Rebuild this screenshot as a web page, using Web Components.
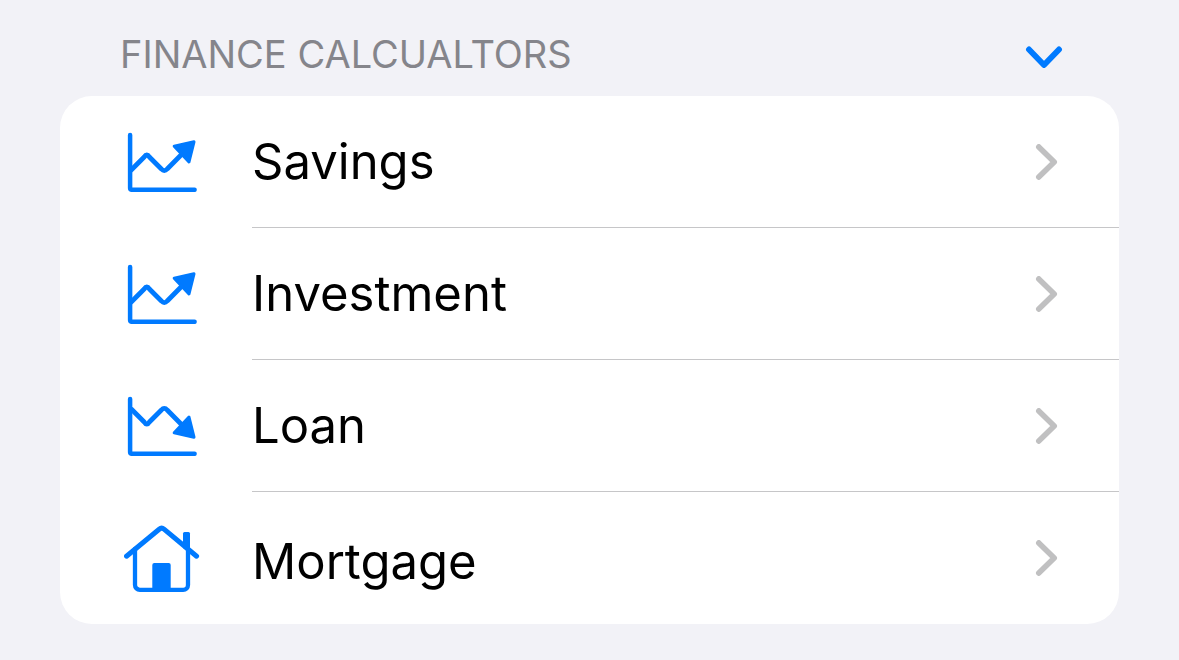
<!DOCTYPE html>
<html lang="en">
<head>
<meta charset="utf-8">
<meta name="viewport" content="width=device-width, initial-scale=1">
<title>Finance calculators</title>
<style>
  body { margin: 0; background: #f2f2f7; font-family: Inter, "Liberation Sans", sans-serif; color: #000; }
</style>
</head>
<body>
<calc-section heading="FINANCE CALCUALTORS">
  <calc-row icon="up" href="#savings">Savings</calc-row>
  <calc-row icon="up" href="#investment">Investment</calc-row>
  <calc-row icon="down" href="#loan">Loan</calc-row>
  <calc-row icon="house" href="#mortgage">Mortgage</calc-row>
</calc-section>
<script>
const AXES = '<path d="M6.1 3V56a1.8 1.8 0 0 0 1.8 1.8H70.6" stroke-width="4.5"/>';
const TREND = '<path d="M7.5 37.7L20.2 25Q22.8 20.6 25.4 25L37.4 37Q40.3 40.2 43.2 37L59 21" stroke-width="4.8"/><path d="M70 9.8L50.2 14.2L65 30Z" fill="currentColor" stroke-width="3"/>';
const ICONS = {
  up: { h: 60, art: AXES + TREND },
  down: { h: 60, art: AXES + '<g transform="matrix(1 0 0 -1 0 51)">' + TREND + '</g>' },
  house: { h: 68, art: `
    <path d="M2.5 32.2L35.2 5.2Q37.6 3.2 40 5.2L72.6 32.2" stroke-width="5"/>
    <path d="M11 25V61a4.8 4.8 0 0 0 4.8 4.8H59.2a4.8 4.8 0 0 0 4.8-4.8V25" stroke-width="4.3"/>
    <path d="M59 24V9.5a1.5 1.5 0 0 1 1.5-1.5h4a1.5 1.5 0 0 1 1.5 1.5V29Z" fill="currentColor" stroke="none"/>
    <path d="M28.3 67V41a2 2 0 0 1 2-2H44.7a2 2 0 0 1 2 2V67Z" fill="currentColor" stroke="none"/>` }
};

class CalcIcon extends HTMLElement {
  connectedCallback() {
    const { h, art } = ICONS[this.getAttribute('name')];
    this.attachShadow({ mode: 'open' }).innerHTML = `
      <style>
        :host { display: block; flex: none; color: #007aff; }
        svg { display: block; }
      </style>
      <svg width="76" height="${h}" viewBox="0 0 76 ${h}" fill="none" stroke="currentColor"
        stroke-linecap="round" stroke-linejoin="round" aria-hidden="true">${art}</svg>`;
  }
}

class CalcRow extends HTMLElement {
  connectedCallback() {
    this.attachShadow({ mode: 'open' }).innerHTML = `
      <style>
        :host { display: block; position: relative; }
        a { display: flex; align-items: center; justify-content: space-between; gap: 24px;
            min-height: 132px; box-sizing: border-box; padding: 0 61px 0 64px;
            color: inherit; text-decoration: none; }
        .title { display: flex; align-items: flex-end; gap: 52px; font-size: 49px; line-height: 60px; }
        .chevron { display: block; flex: none; }
        :host(:not(:last-of-type))::after { content: ""; position: absolute; left: 192px; right: 0;
            bottom: 0; height: 1px; background: #c6c6c8; }
      </style>
      <a href="${this.getAttribute('href')}">
        <span class="title"><calc-icon name="${this.getAttribute('icon')}"></calc-icon><span><slot></slot></span></span>
        <svg class="chevron" width="24" height="36" viewBox="0 0 24 36" fill="none" stroke="#c0c0c1"
          stroke-width="5.6" stroke-linecap="round" stroke-linejoin="round" aria-hidden="true">
          <path d="M4.8 2.9L20.2 18L4.8 33.1"/></svg>
      </a>`;
  }
}

class CalcSection extends HTMLElement {
  connectedCallback() {
    this.attachShadow({ mode: 'open' }).innerHTML = `
      <style>
        :host { display: block; padding: 0 60px 36px; }
        header { display: flex; align-items: center; justify-content: space-between;
            padding: 30px 55px 18px 60px; }
        h2 { margin: 0; font-size: 38px; line-height: 48px; font-weight: 400; color: #85858b; }
        button { display: block; padding: 0; border: 0; background: none; color: #007aff; cursor: pointer; }
        button svg { display: block; }
        .card { background: #fff; border-radius: 32px; overflow: hidden; }
      </style>
      <header>
        <h2 id="heading">${this.getAttribute('heading')}</h2>
        <button type="button" aria-label="Collapse section" aria-expanded="true" aria-controls="card">
          <svg width="40" height="28" viewBox="0 0 40 28" fill="none" stroke="currentColor" stroke-width="5.9"
            stroke-linecap="round" stroke-linejoin="round" aria-hidden="true"><path d="M5 9.5L20 25L35 9.5"/></svg>
        </button>
      </header>
      <nav class="card" id="card" aria-labelledby="heading"><slot></slot></nav>`;
    const button = this.shadowRoot.querySelector('button');
    const card = this.shadowRoot.querySelector('.card');
    button.addEventListener('click', () => {
      card.hidden = !card.hidden;
      button.setAttribute('aria-expanded', String(!card.hidden));
    });
  }
}

customElements.define('calc-icon', CalcIcon);
customElements.define('calc-row', CalcRow);
customElements.define('calc-section', CalcSection);
</script>
</body>
</html>
